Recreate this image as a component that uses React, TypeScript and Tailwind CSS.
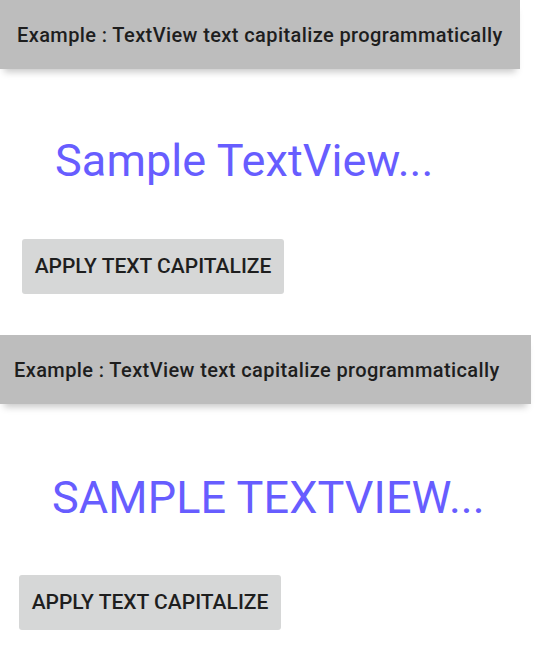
import React from "react";

const font = { fontFamily: "Roboto, 'Noto Sans', Arial, sans-serif" };

function Screen({
  width,
  inset,
  label,
  textTop,
  buttonTop,
}: {
  width: string;
  inset: string;
  label: string;
  textTop: string;
  buttonTop: string;
}) {
  return (
    <section className={`${width} flex flex-col`}>
      <header
        className={`h-[69px] bg-[#bdbdbd] flex items-center ${inset} shadow-[0_7px_7px_-4px_rgba(0,0,0,0.22)] relative z-10`}
      >
        <h1 className="text-[20px] leading-[24px] font-medium text-[#1e1e1e] tracking-[0.4px]">
          Example : TextView text capitalize programmatically
        </h1>
      </header>
      <div className={`flex flex-col ${textTop}`}>
        <p className="text-[45px] leading-[52px] text-[#675dff] font-normal tracking-[0.1px]">{label}</p>
      </div>
      <div className={buttonTop}>
        <button className="w-[262px] h-[55px] rounded-[3px] bg-[#d6d7d7] text-[21px] font-medium text-[#1e1e1e] flex items-center justify-center">
          APPLY TEXT CAPITALIZE
        </button>
      </div>
    </section>
  );
}

export default function App() {
  return (
    <div className="w-[535px] h-[655px] bg-white overflow-hidden" style={font}>
      <Screen
        width="w-[520px]"
        inset="pl-[17px]"
        label="Sample TextView..."
        textTop="pt-[66px] pl-[55px]"
        buttonTop="pt-[52px] pl-[22px]"
      />
      <div className="h-[41px]" />
      <Screen
        width="w-[531px]"
        inset="pl-[14px]"
        label="SAMPLE TEXTVIEW..."
        textTop="pt-[68px] pl-[52px]"
        buttonTop="pt-[51px] pl-[19px]"
      />
    </div>
  );
}
